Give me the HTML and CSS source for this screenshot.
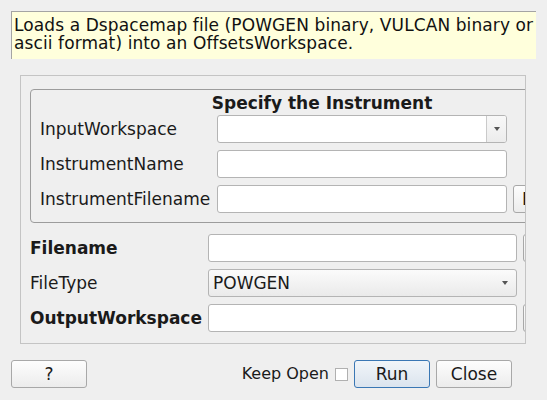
FILE: index.html
```html
<!DOCTYPE html>
<html>
<head>
<meta charset="utf-8">
<link rel="stylesheet" href="styles.css">
</head>
<body>
<div class="tooltip">Loads a Dspacemap file (POWGEN binary, VULCAN binary or<br>ascii format) into an OffsetsWorkspace.</div>
<div class="outer">
  <div class="inner">
    <div class="title">Specify the Instrument</div>
    <div class="grid inner-grid">
      <span class="label">InputWorkspace</span>
      <div class="field combo-edit"><span class="drop"><span class="arrow"></span></span></div>
      <span></span>
      <span class="label">InstrumentName</span>
      <div class="field"></div>
      <span></span>
      <span class="label">InstrumentFilename</span>
      <div class="field"></div>
      <button class="btn side">Browse</button>
    </div>
  </div>
  <div class="grid outer-grid">
    <span class="label bold">Filename</span>
    <div class="field"></div>
    <button class="btn side"></button>
    <span class="label">FileType</span>
    <div class="combo"><span class="value">POWGEN</span><span class="arrow"></span></div>
    <span></span>
    <span class="label bold">OutputWorkspace</span>
    <div class="field"></div>
    <button class="btn side"></button>
  </div>
</div>
<div class="bar">
  <button class="btn">?</button>
  <span class="spacer"></span>
  <span class="keep">Keep Open</span>
  <span class="check"></span>
  <button class="btn run">Run</button>
  <button class="btn">Close</button>
</div>
</body>
</html>
```
FILE: styles.css
```css
* { box-sizing: border-box; }
html, body {
  margin: 0;
  padding: 0;
  background: #efefef;
  width: 547px;
  height: 400px;
  overflow: hidden;
  font-family: "DejaVu Sans", sans-serif;
  font-size: 17px;
  color: #1a1a1a;
}
.tooltip {
  margin: 11px 0 0 11px;
  width: 525px;
  height: 48px;
  background: #ffffdc;
  border-top: 1px solid #a4a4a4;
  border-left: 1px solid #a4a4a4;
  padding: 4px 0 0 2px;
  line-height: 18px;
  letter-spacing: 0.1px;
  color: #111;
  white-space: nowrap;
}
.outer {
  margin: 16px 0 0 20px;
  width: 506px;
  height: 269px;
  border: 1px solid #c4c4c4;
  padding: 13px 0 0 9px;
  overflow: hidden;
}
.inner {
  width: 584px;
  border: 1px solid #9c9c9c;
  border-radius: 4px;
  padding: 4px 9px 9px 9px;
}
.title {
  font-weight: bold;
  text-align: center;
  line-height: 18px;
  margin-bottom: 3px;
}
.grid {
  display: grid;
  grid-auto-rows: 28px;
  row-gap: 7px;
  align-items: center;
}
.inner-grid { grid-template-columns: 177px 290px 86px; }
.outer-grid {
  margin-top: 11px;
  grid-template-columns: 178px 309px 86px;
}
.label { white-space: nowrap; line-height: 18px; }
.bold { font-weight: bold; }
.field {
  height: 28px;
  background: #fff;
  border: 1px solid #b4b4b4;
  border-radius: 3px;
}
.combo-edit {
  display: flex;
  justify-content: flex-end;
}
.drop {
  width: 20px;
  border-left: 1px solid #cacaca;
  background: linear-gradient(#f8f8f8, #ececec);
  border-radius: 0 2px 2px 0;
  display: flex;
  align-items: center;
  justify-content: center;
}
.arrow {
  width: 0;
  height: 0;
  border-left: 3.5px solid transparent;
  border-right: 3.5px solid transparent;
  border-top: 4px solid #555;
}
.combo {
  height: 28px;
  border: 1px solid #b4b4b4;
  border-radius: 3px;
  background: linear-gradient(#fbfbfb, #eaeaea);
  display: flex;
  align-items: center;
  justify-content: space-between;
  padding: 0 8px 0 4px;
}
.value { line-height: 18px; }
.btn {
  font-family: "DejaVu Sans", sans-serif;
  font-size: 17px;
  color: #1a1a1a;
  height: 28px;
  width: 76px;
  padding: 0;
  border: 1px solid #a8a8a8;
  border-radius: 3px;
  background: linear-gradient(#fdfdfd, #ececec);
}
.side {
  margin-left: 6px;
  width: 80px;
}
.bar {
  margin-top: 16px;
  display: flex;
  align-items: center;
  padding-left: 11px;
  padding-right: 35px;
  height: 28px;
}
.spacer { flex: 1; }
.keep { line-height: 18px; white-space: nowrap; font-size: 16px; }
.check {
  width: 13px;
  height: 13px;
  margin: 1px 6px 0 6px;
  background: #fff;
  border: 1px solid #b0b0b0;
}
.run {
  border-color: #3a77b4;
  background: linear-gradient(#f1f5f9, #dbe4ee);
  margin-right: 6px;
}
```
